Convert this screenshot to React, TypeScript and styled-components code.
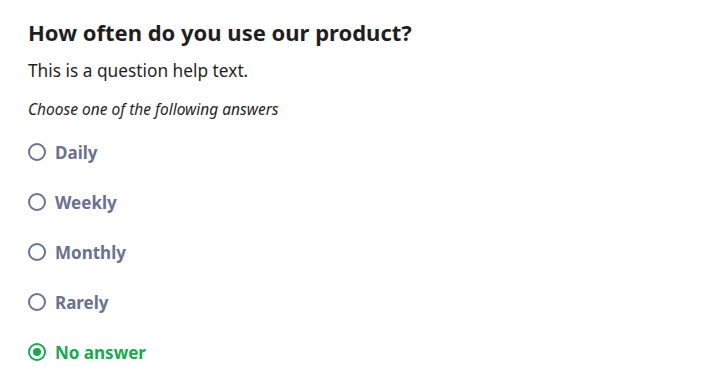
import React, { useState } from 'react';
import styled, { createGlobalStyle } from 'styled-components';

const GlobalStyle = createGlobalStyle`
  body {
    margin: 0;
    background: #ffffff;
    font-family: "Noto Sans", "Open Sans", sans-serif;
  }
`;

const options = ['Daily', 'Weekly', 'Monthly', 'Rarely', 'No answer'];

export default function App() {
  const [selected, setSelected] = useState('No answer');

  return (
    <>
      <GlobalStyle />
      <Question>
        <Title>How often do you use our product?</Title>
        <Help>This is a question help text.</Help>
        <Hint>Choose one of the following answers</Hint>
        <Options>
          {options.map((opt) => (
            <Option key={opt} checked={selected === opt} onClick={() => setSelected(opt)}>
              <Radio checked={selected === opt} />
              {opt}
            </Option>
          ))}
        </Options>
      </Question>
    </>
  );
}

const Question = styled.div`
  display: flex;
  flex-direction: column;
  padding: 18px 28px;
`;

const Title = styled.h2`
  margin: 0;
  font-size: 22px;
  line-height: 28px;
  font-weight: 700;
  color: #1f1f1f;
`;

const Help = styled.p`
  margin: 13px 0 0;
  font-size: 17.3px;
  line-height: 24px;
  color: #1f1f1f;
`;

const Hint = styled.p`
  margin: 15px 0 0;
  font-size: 15.5px;
  line-height: 22px;
  font-style: italic;
  color: #1f1f1f;
`;

const Options = styled.div`
  display: flex;
  flex-direction: column;
  gap: 26px;
  margin-top: 20px;
`;

const Option = styled.label<{ checked: boolean }>`
  display: flex;
  align-items: center;
  gap: 9px;
  height: 24px;
  font-size: 17px;
  font-weight: 700;
  color: ${(p) => (p.checked ? '#1aa850' : '#6b7190')};
  cursor: pointer;
`;

const Radio = styled.span<{ checked: boolean }>`
  box-sizing: border-box;
  width: 18px;
  height: 18px;
  border-radius: 50%;
  border: 2px solid ${(p) => (p.checked ? '#1aa850' : '#6b7190')};
  display: flex;
  align-items: center;
  justify-content: center;

  &::after {
    content: '';
    width: 8px;
    height: 8px;
    border-radius: 50%;
    background: #1aa850;
    display: ${(p) => (p.checked ? 'block' : 'none')};
  }
`;
